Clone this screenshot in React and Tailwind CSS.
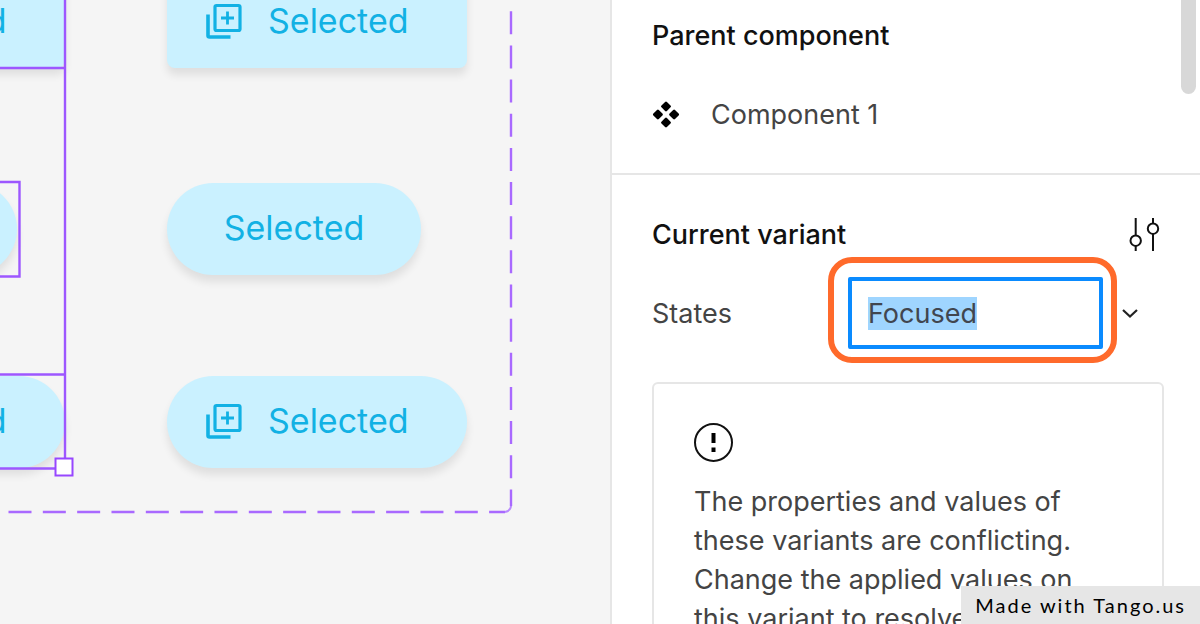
import { useEffect, useRef } from "react";

function LibraryAddIcon() {
  return (
    <svg className="h-9 w-9 shrink-0" viewBox="0 0 36 36" fill="none" stroke="currentColor" strokeWidth="3.200" aria-hidden="true">
      <rect x="9" y="2.500" width="25" height="25" rx="1.500" />
      <path d="M2 11.500V32.500a1.500 1.500 0 0 0 1.500 1.500H24.500" strokeWidth="3.600" />
      <path d="M21.500 8.500v13M15 15h13" strokeWidth="2.800" />
    </svg>
  );
}

function VariantButton({ label, icon, className }) {
  return (
    <button
      type="button"
      className={`absolute flex h-[92px] items-center bg-[#caf1ff] pb-0.5 text-[34px] leading-none text-[#12b1e4] shadow-[0_7px_8px_rgba(0,0,0,0.09)] ${icon ? "w-[300px] gap-[26px] pl-[39px]" : "w-[254px] justify-center"} ${className}`}
    >
      {icon && <LibraryAddIcon />}
      {label}
    </button>
  );
}

function Canvas() {
  return (
    <main className="relative min-w-0 flex-1 overflow-hidden bg-[#f5f5f5]">
      <VariantButton label="Selected" icon className="-left-[235px] -top-6 rounded-lg" />
      <VariantButton label="Selected" className="-left-[237px] top-[183px] rounded-full" />
      <VariantButton label="Selected" icon className="-left-[235px] top-[376px] rounded-full" />
      <VariantButton label="Selected" icon className="left-[167px] -top-6 rounded-lg" />
      <VariantButton label="Selected" className="left-[167px] top-[183px] rounded-full" />
      <VariantButton label="Selected" icon className="left-[167px] top-[376px] rounded-full" />
      <svg className="pointer-events-none absolute left-0 top-0 h-[520px] w-[520px]" viewBox="0 0 520 520" fill="none" stroke="#9d57ff" strokeWidth="2.400" aria-hidden="true">
        <path d="M65 0V468M0 68H65M0 374.500H65M0 468.500H65M0 182H19.500V276.500H0" />
        <path d="M511 11.300V506" stroke="#a969ff" strokeDasharray="23 11.150" />
        <path d="M8.500 512H505" stroke="#a969ff" strokeDasharray="23 11.330" />
        <path d="M511 506Q510.500 511 505 512" stroke="#b98aff" strokeWidth="2" />
        <rect x="55.500" y="458.500" width="17" height="17" fill="#fff" stroke="#9747ff" strokeWidth="2" />
      </svg>
    </main>
  );
}

function ComponentSetIcon() {
  return (
    <svg className="h-7 w-7 shrink-0" viewBox="0 0 28 28" fill="#000" stroke="#000" strokeWidth="2.600" strokeLinejoin="round" aria-hidden="true">
      <path d="M14 1.800l3.600 3.600-3.600 3.600-3.600-3.600zM14 18l3.600 3.600-3.600 3.600-3.600-3.600zM5.900 9.900l3.600 3.600-3.600 3.600-3.600-3.600zM22.100 9.900l3.600 3.600-3.600 3.600-3.600-3.600z" />
    </svg>
  );
}

function VariantField() {
  const ref = useRef(null);
  useEffect(() => {
    ref.current.focus();
    ref.current.select();
  }, []);
  return (
    <div className="relative w-[255px]">
      <input
        ref={ref}
        id="states"
        type="text"
        defaultValue="Focused"
        className="block h-[72px] w-full rounded-xs border-4 border-[#0a8bff] bg-white pl-4 text-[#444] outline-none selection:bg-[#9fd5ff] selection:text-[#41464f]"
      />
      <div className="pointer-events-none absolute -bottom-3.5 -left-5 -right-3.5 -top-5 rounded-3xl border-6 border-[#ff6a2b]" />
    </div>
  );
}

function Inspector() {
  return (
    <aside className="relative w-[590px] shrink-0 overflow-hidden border-l-2 border-[#e6e6e6] bg-white text-[27px] leading-[39px] text-[#444]">
      <section className="flex flex-col gap-10 border-b-2 border-[#e6e6e6] px-10 pb-[39px] pt-4">
        <h2 className="font-medium text-[#111]">Parent component</h2>
        <div className="flex items-center gap-[31px]">
          <ComponentSetIcon />
          <span>Component 1</span>
        </div>
      </section>
      <section className="pl-10 pr-9 pt-10">
        <div className="flex items-center justify-between">
          <h2 className="font-medium text-[#111]">Current variant</h2>
          <button type="button" aria-label="Edit variant properties">
            <svg className="h-9 w-9" viewBox="0 0 36 36" fill="none" stroke="#111" strokeWidth="2" aria-hidden="true">
              <path d="M7.700 1v17.500M7.700 29v5M25 1v5.500M25 17v17" />
              <circle cx="7.700" cy="23.700" r="5.200" />
              <circle cx="25" cy="11.700" r="5.200" />
            </svg>
          </button>
        </div>
        <div className="mt-[23px] flex items-center">
          <label htmlFor="states" className="w-[196px]">States</label>
          <VariantField />
          <button type="button" aria-label="Show values" className="ml-[18px]">
            <svg className="h-[18px] w-[18px]" viewBox="0 0 18 18" fill="none" stroke="#222" strokeWidth="2.200" aria-hidden="true">
              <path d="M2 6l7 6.500 7-6.500" />
            </svg>
          </button>
        </div>
        <div className="mt-[33px] rounded-md border-2 border-[#e6e6e6] px-10 py-[39px]">
          <svg className="mb-5 h-[39px] w-[39px]" viewBox="0 0 39 39" fill="none" stroke="#111" aria-hidden="true">
            <circle cx="19.500" cy="19.500" r="18.500" strokeWidth="2" />
            <path d="M19.500 10v10M19.500 24.500v4.500" stroke="#000" strokeWidth="4" />
          </svg>
          <p>
            The properties and values of these variants are conflicting. Change the applied values on this variant to resolve the conflict.
          </p>
        </div>
      </section>
      <div className="absolute right-1 top-0 h-[94px] w-[15px] rounded-b-full bg-[#d8d8d8]" />
    </aside>
  );
}

export default function App() {
  return (
    <div className="relative flex h-screen overflow-hidden font-['Inter',sans-serif]">
      <Canvas />
      <Inspector />
      <a href="#tango" className="absolute bottom-0 right-0 bg-[#e6e6e6] px-3.5 py-1.5 font-['Lato',sans-serif] text-xl leading-[26px] tracking-widest text-black">
        Made with Tango.us
      </a>
    </div>
  );
}
